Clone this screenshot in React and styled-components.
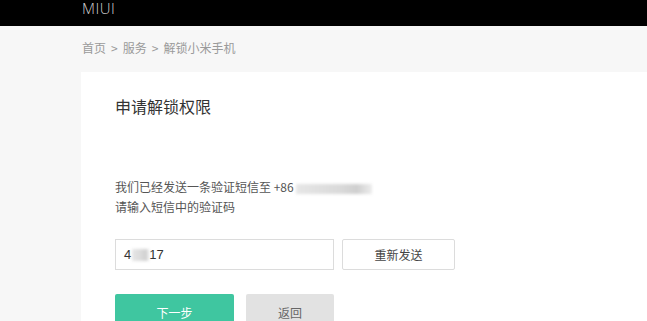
import React from 'react';
import styled, { createGlobalStyle } from 'styled-components';

const Global = createGlobalStyle`
  html, body {
    margin: 0;
    padding: 0;
    background: #f7f7f7;
    font-family: "Noto Sans CJK SC", "Liberation Sans", sans-serif;
    overflow: hidden;
  }
`;

const Header = styled.div`
  height: 26px;
  background: #000;
  padding-left: 82px;
  display: flex;
  align-items: flex-start;
`;

const Logo = styled.span`
  font-family: "Open Sans", "Liberation Sans", sans-serif;
  font-weight: 300;
  font-size: 15px;
  line-height: 16px;
  color: #cfcfcf;
  letter-spacing: 0.5px;
`;

const Crumbs = styled.div`
  padding: 12px 0 0 82px;
  font-size: 12px;
  line-height: 20px;
  color: #9a9a9a;
  display: flex;
  gap: 5px;
`;

const Card = styled.div`
  margin: 14px 0 0 81px;
  background: #fff;
  padding: 24px 0 0 34px;
  height: 400px;
`;

const Title = styled.h2`
  margin: 0;
  font-size: 16px;
  font-weight: 400;
  line-height: 20px;
  color: #333;
`;

const Info = styled.p`
  margin: 61px 0 0;
  font-size: 12px;
  line-height: 20px;
  color: #555;
`;

const Blur = styled.span`
  display: inline-block;
  vertical-align: middle;
  width: ${(p) => p.$w}px;
  height: ${(p) => p.$h}px;
  margin-left: ${(p) => p.$ml || 0}px;
  background: linear-gradient(90deg, #e6e6e6, #d9d9d9 60%, #cfcfcf 80%, #ececec);
  filter: blur(1.5px);
`;

const Row = styled.div`
  display: flex;
  gap: 8px;
  margin-top: ${(p) => p.$mt}px;
`;

const Input = styled.div`
  width: 219px;
  height: 31px;
  box-sizing: border-box;
  border: 1px solid #dcdcdc;
  display: flex;
  align-items: center;
  padding-left: 8px;
  font-family: "Liberation Sans", sans-serif;
  font-size: 13px;
  color: #333;
`;

const Btn = styled.div`
  width: ${(p) => p.$w}px;
  height: ${(p) => p.$h}px;
  box-sizing: border-box;
  display: flex;
  align-items: center;
  justify-content: center;
  font-size: 12px;
  border-radius: 2px;
  background: ${(p) => p.$bg};
  color: ${(p) => p.$color};
  border: ${(p) => (p.$border ? '1px solid #dcdcdc' : 'none')};
`;

export default function App() {
  return (
    <>
      <Global />
      <Header>
        <Logo>MIUI</Logo>
      </Header>
      <Crumbs>
        <span>首页</span>
        <span>&gt;</span>
        <span>服务</span>
        <span>&gt;</span>
        <span>解锁小米手机</span>
      </Crumbs>
      <Card>
        <Title>申请解锁权限</Title>
        <Info>
          我们已经发送一条验证短信至 +86
          <Blur $w={76} $h={10} $ml={2} />
          <br />
          请输入短信中的验证码
        </Info>
        <Row $mt={22}>
          <Input>
            4<Blur $w={17} $h={12} $ml={1} />17
          </Input>
          <Btn $w={113} $h={31} $bg="#fff" $color="#444" $border>
            重新发送
          </Btn>
        </Row>
        <Row $mt={24}>
          <Btn $w={119} $h={36} $bg="#3fc6a0" $color="#fff">
            下一步
          </Btn>
          <Btn $w={88} $h={36} $bg="#e2e2e2" $color="#666" style={{ marginLeft: 4 }}>
            返回
          </Btn>
        </Row>
      </Card>
    </>
  );
}
